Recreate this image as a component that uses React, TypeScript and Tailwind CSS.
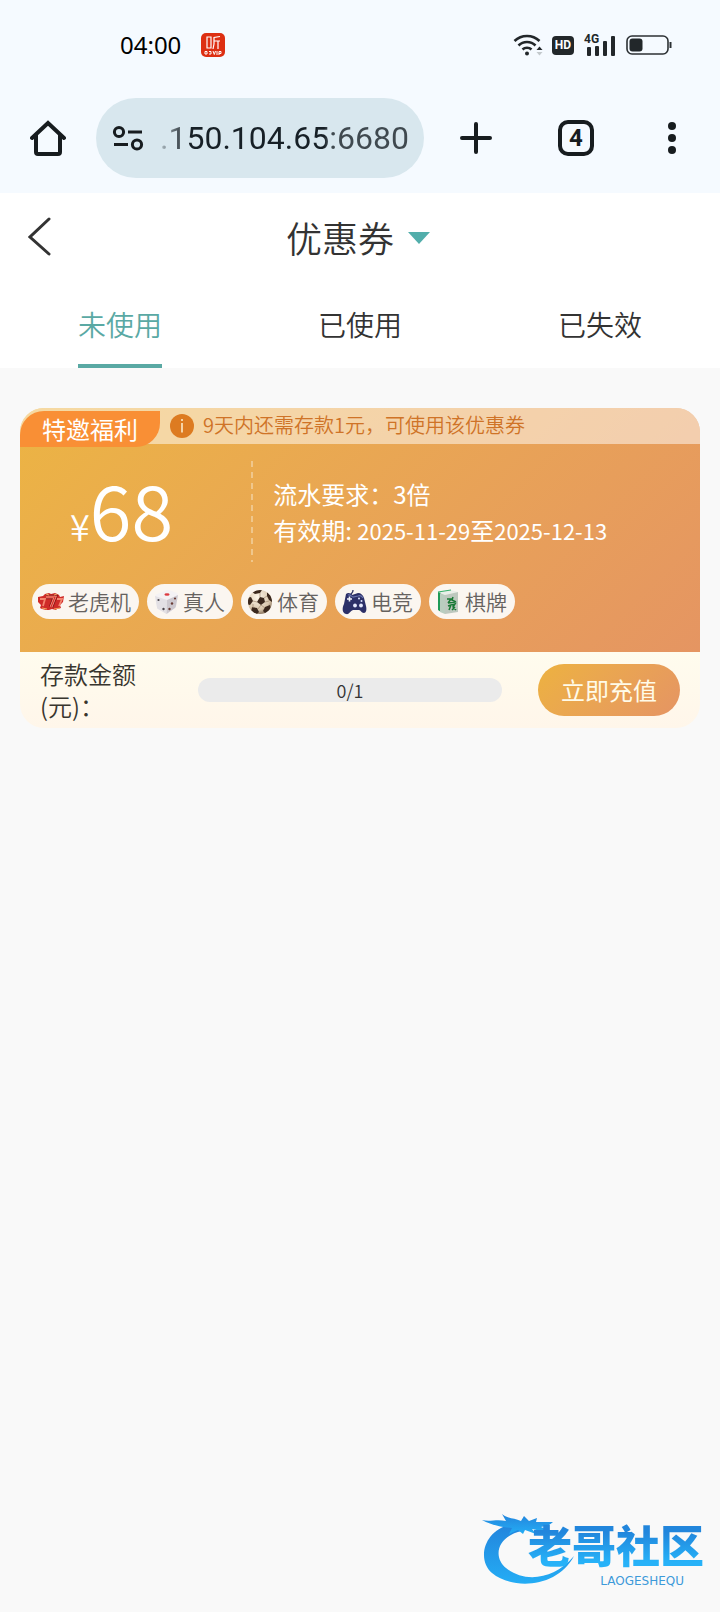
import type { ReactNode } from "react";

const tabs = ["未使用", "已使用", "已失效"];

const games: { name: string; icon: ReactNode }[] = [
    { name: "老虎机", icon: <SlotIcon /> },
    { name: "真人", icon: <DiceIcon /> },
    { name: "体育", icon: <BallIcon /> },
    { name: "电竞", icon: <GamepadIcon /> },
    { name: "棋牌", icon: <MahjongIcon /> },
];

function SlotIcon() {
    return (
        <svg viewBox="0 0 26 26" className="h-[26px] w-[26px] shrink-0" aria-hidden="true">
            <path
                d="M0 8l5-1 2-2 4-1 2 1 4-1 4 2 1 2 4-1-1 6-3 3 1 3-4 1-1 1-4-1-3 1-3 0-4-1-2-1 1-3-3-3z"
                fill="#cf2b28"
            />
            <path d="M2 10h5l-2 7M19 10h5l-3 7" stroke="#f4856f" strokeWidth="1.800" fill="none" />
            <path d="M8 8h9l-4 10" stroke="#8f1215" strokeWidth="4.500" fill="none" />
            <path d="M8 8h9l-4 10" stroke="#f7a08a" strokeWidth="2.600" fill="none" />
            <path d="M8 8h9l-4 10" stroke="#d8302b" strokeWidth="1.200" fill="none" />
            <path d="M4 19l5 1M16 20l6-1M8 5l3 1M16 6l3-1" stroke="#f3a35c" strokeWidth="1" />
        </svg>
    );
}

function DiceIcon() {
    return (
        <svg viewBox="0 0 26 26" className="h-[26px] w-[26px] shrink-0" aria-hidden="true">
            <path
                d="M2 7q0-1 1-1.500L14 1q1-.5 2 0l8 3q1 .5 1 2l-2 11q0 1-1 2l-7 5.500q-1 .8-2 .3L5 20q-1-.5-1-1.500z"
                fill="#f4f2f4"
            />
            <path d="M2 7l12 4-.5 14L5 20q-1-.5-1-1.500z" fill="#e3e0e4" />
            <path d="M14 11l11-5-2 11q0 1-1 2l-8.500 6z" fill="#cdc8ce" />
            <ellipse cx="14" cy="5.500" rx="2.600" ry="1.200" fill="#dd3a40" />
            <circle cx="5.500" cy="11" r="1.100" fill="#4a454c" />
            <circle cx="10.500" cy="20" r="1.200" fill="#4a454c" />
            <circle cx="16.500" cy="20" r="1.200" fill="#6a3c35" />
            <circle cx="19" cy="14.500" r="1.200" fill="#6a3c35" />
            <circle cx="22" cy="9.500" r="1.100" fill="#6a3c35" />
        </svg>
    );
}

function BallIcon() {
    return (
        <svg viewBox="0 0 26 26" className="h-[26px] w-[26px] shrink-0" aria-hidden="true">
            <defs>
                <radialGradient id="ball" cx="0.4" cy="0.3" r="0.75">
                    <stop offset="0" stopColor="#fdf6ea" />
                    <stop offset="0.7" stopColor="#d9c6ac" />
                    <stop offset="1" stopColor="#7d6650" />
                </radialGradient>
                <clipPath id="ballClip">
                    <circle cx="13" cy="13" r="12" />
                </clipPath>
            </defs>
            <circle cx="13" cy="13" r="12" fill="url(#ball)" />
            <g clipPath="url(#ballClip)" fill="#3b281d">
                <path d="M13 8l4 1 1 4-4 3-4-3z" />
                <path d="M8 0l7 1-2 3-5 1-3-2z" />
                <path d="M20 3l5 5v5l-3-2-2-4z" />
                <path d="M0 9l4-1 2 4-3 4-4-1z" />
                <path d="M5 18l5 1 2 4-3 3-5-3z" />
                <path d="M18 18l5-2 1 5-5 4-3-3z" />
                <path
                    d="M13 8V4M17 9l3-2M18 13l4-1M14 16l4 3M10 13l-4-1M14 16l-3 4M6 15l0 4"
                    stroke="#a08a70"
                    strokeWidth="0.7"
                />
            </g>
        </svg>
    );
}

function GamepadIcon() {
    return (
        <svg viewBox="0 0 26 26" className="h-[26px] w-[26px] shrink-0" aria-hidden="true">
            <path d="M10 6c0-3 2-1 2-5" stroke="#2b2f5c" strokeWidth="1.300" fill="none" />
            <path
                d="M5 5c2-2 5-1 6 1l6-2c3 0 5 2 6 5l2 8c1 4 0 7-2 7-3 0-3-3-5-3l-6 0c-3 1-4 5-7 4-4-1-4-6-2-10z"
                fill="#2c3068"
            />
            <path d="M7 6c2-1 3 1 5 2l5-1c2-1 4 0 5 2" stroke="#6974ad" strokeWidth="1.200" fill="none" />
            <path d="M8.500 7.500v5M6 10h5" stroke="#f2f4fb" strokeWidth="1.600" />
            <circle cx="18" cy="9.500" r="1" fill="#dfe5ff" />
            <circle cx="20.500" cy="12" r="1" fill="#dfe5ff" />
            <circle cx="14" cy="16.500" r="1.900" fill="#e6eafd" />
            <circle cx="20" cy="16.500" r="1.900" fill="#e6eafd" />
        </svg>
    );
}

function MahjongIcon() {
    return (
        <svg viewBox="0 0 26 26" className="h-[26px] w-[26px] shrink-0" aria-hidden="true">
            <path d="M3 3l13-2 7 2-13 3z" fill="#e9efe9" />
            <path d="M3 3l3 1v19l-3-2z" fill="#1f9a56" />
            <path d="M5 4l5 2v19l-5-2z" fill="#b9cdbf" />
            <path d="M10 6l13-3v20l-13 2z" fill="#bdc8be" />
            <path d="M3 3l13-2" stroke="#34b06a" strokeWidth="1.200" />
            <path
                d="M12 10l4 0-3 4M18 8l-1 3 4 2M13 14l7-1M13 17l3-1-2 5M17 16l3-1-2 3 3 3M17 21l3-3"
                stroke="#197a35"
                strokeWidth="1.500"
                fill="none"
            />
        </svg>
    );
}

function StatusBar() {
    return (
        <div className="flex h-[90px] items-center justify-between pl-30 pr-12 text-black">
            <div className="flex items-center gap-5">
                <time className="font-['Noto_Sans'] text-2xl">04:00</time>
                <svg viewBox="0 0 24 24" className="h-6 w-6" aria-hidden="true">
                    <rect width="24" height="24" rx="5" fill="#dd2f12" />
                    <path d="M6 4h4v11H6zM19 3.500l-6 1V11l-1 5M13 8h6M17 8v8" stroke="#fff" strokeWidth="1.200" fill="none" />
                    <path
                        d="M4 18.500h2v2.500H4zM8 18.500h2v2.500H8M12 18l1.300 3.500L14.500 18M16 18v4M18 22v-3.500h2v2h-2"
                        stroke="#fff"
                        strokeWidth="1"
                        fill="none"
                    />
                </svg>
            </div>
            <div className="flex items-center gap-[9px]">
                <svg viewBox="0 0 30 24" className="h-6 w-[30px]" fill="none" stroke="#22272a" strokeWidth="2.600" aria-hidden="true">
                    <path d="M1.500 8a18 18 0 0 1 25 0M5.500 12.500a12 12 0 0 1 17 0M9.500 16.500a6.500 6.500 0 0 1 9 0" />
                    <circle cx="14" cy="20.500" r="2" fill="#22272a" stroke="none" />
                    <path d="M23.500 17l3-3.500 3 3.500z" fill="#22272a" stroke="none" />
                    <path d="M23.500 19l3 3.500 3-3.500z" fill="#c3c9cc" stroke="none" />
                </svg>
                <span className="flex h-[19px] w-[22px] items-center justify-center rounded-sm bg-[#22272a] font-['Roboto'] text-xs font-bold text-white">
                    HD
                </span>
                <span className="relative h-6 w-[34px]">
                    <svg viewBox="0 0 34 24" className="h-6 w-[34px]" fill="#22272a" aria-hidden="true">
                        <rect x="4" y="14" width="4" height="9" rx="1" />
                        <rect x="12" y="13" width="4" height="10" rx="1" />
                        <rect x="20" y="8" width="4" height="15" rx="1" />
                        <rect x="28" y="3" width="4" height="20" rx="1" />
                    </svg>
                    <span className="absolute left-px top-0 font-['Roboto'] text-xs leading-3 font-bold text-[#22272a]">4G</span>
                </span>
                <svg viewBox="0 0 46 22" className="h-[22px] w-[46px]" aria-hidden="true">
                    <rect x="1" y="2" width="41" height="18" rx="5" fill="none" stroke="#2c3134" strokeWidth="1.600" />
                    <rect x="3.500" y="4.500" width="13" height="13" rx="3" fill="#22272a" />
                    <path d="M44.500 8v6" stroke="#2c3134" strokeWidth="2" />
                </svg>
            </div>
        </div>
    );
}

function BrowserBar() {
    return (
        <div className="flex items-center pt-2 pr-9 pb-[15px] pl-[30px] text-[#171c1f]">
            <button type="button" aria-label="主页">
                <svg viewBox="0 0 36 36" className="h-9 w-9" fill="none" stroke="currentColor" strokeWidth="4" aria-hidden="true">
                    <path d="M2 18L18 3l16 15" strokeLinecap="round" />
                    <path d="M6 15v17q0 2 2 2h20q2 0 2-2V15" />
                </svg>
            </button>
            <div className="ml-[30px] flex h-20 min-w-0 flex-1 items-center rounded-full bg-[#d8e7ee] pr-4 pl-4">
                <svg viewBox="0 0 32 28" className="h-7 w-8 shrink-0" fill="none" stroke="currentColor" strokeWidth="3" aria-hidden="true">
                    <circle cx="7" cy="8" r="4.600" />
                    <path d="M16 8h14M2 20.500h14" />
                    <circle cx="25" cy="20.500" r="4.600" />
                </svg>
                <input
                    type="text"
                    aria-label="网址"
                    defaultValue=".150.104.65:6680"
                    className="ml-4 w-full min-w-0 bg-[linear-gradient(90deg,#17202600_-8px,#172026_28px,#172026_164px,#3f494f_168px)] bg-clip-text font-['Roboto'] text-[32px] leading-10 text-transparent outline-none"
                />
            </div>
            <button type="button" aria-label="新标签页" className="ml-9">
                <svg viewBox="0 0 32 32" className="h-8 w-8" stroke="currentColor" strokeWidth="4" strokeLinecap="round" aria-hidden="true">
                    <path d="M16 2v28M2 16h28" />
                </svg>
            </button>
            <button
                type="button"
                className="ml-[66px] flex h-9 w-9 items-center justify-center rounded-[10px] border-4 border-current font-['Roboto'] text-2xl font-bold"
            >
                4
            </button>
            <button type="button" aria-label="更多" className="ml-[66px]">
                <svg viewBox="0 0 24 36" className="h-9 w-6" fill="currentColor" aria-hidden="true">
                    <circle cx="12" cy="6" r="4" />
                    <circle cx="12" cy="18" r="4" />
                    <circle cx="12" cy="30" r="4" />
                </svg>
            </button>
        </div>
    );
}

function PageHeader() {
    return (
        <header className="bg-white text-[#333]">
            <div className="grid h-[88px] grid-cols-[60px_1fr_64px] items-center">
                <button type="button" aria-label="返回" className="pl-7">
                    <svg viewBox="0 0 24 40" className="h-10 w-6" fill="none" stroke="currentColor" strokeWidth="3" strokeLinecap="round" aria-hidden="true">
                        <path d="M21 2L2 20l19 17" />
                    </svg>
                </button>
                <button type="button" className="flex items-center justify-center gap-3.5 text-4xl font-[350]">
                    优惠券
                    <svg viewBox="0 0 22 14" className="h-3.5 w-[22px]" fill="#52aeab" aria-hidden="true">
                        <path d="M0 2h22L11 14z" />
                    </svg>
                </button>
            </div>
            <nav className="grid grid-cols-3 pt-1">
                {tabs.map((tab, i) => (
                    <button key={tab} type="button" className="flex justify-center text-[28px] leading-[79px] font-[350]">
                        {i === 0 ? (
                            <span className="border-b-4 border-[#5aa9a4] text-[#5aa9a4]">{tab}</span>
                        ) : (
                            <span className="border-b-4 border-transparent">{tab}</span>
                        )}
                    </button>
                ))}
            </nav>
        </header>
    );
}

function CouponCard() {
    return (
        <section className="overflow-hidden rounded-3xl font-[350]">
            <div className="bg-linear-135 from-[#ecb443] to-[#e59562] pb-[33px] text-white">
                {/* Notice strip */}
                <div className="flex h-9 items-start bg-white/50">
                    <span className="mt-[3px] h-9 rounded-tl-3xl rounded-br-3xl bg-[#f98f35] px-[22px] text-2xl leading-9 font-normal">
                        特邀福利
                    </span>
                    <svg viewBox="0 0 24 24" className="mt-1.5 ml-2.5 h-6 w-6" aria-hidden="true">
                        <circle cx="12" cy="12" r="12" fill="#dd7b21" />
                        <path d="M12 9v9.500M12 5v2" stroke="#f6d3a6" strokeWidth="2" />
                    </svg>
                    <p className="ml-[9px] text-xl leading-[34px] text-[#cf7327]">9天内还需存款1元，可使用该优惠券</p>
                </div>

                {/* Amount and terms */}
                <div className="mt-[17px] flex h-[101px] items-center">
                    <div className="flex w-[34%] items-baseline pb-2 pl-[50px]">
                        <span className="text-4xl">¥</span>
                        <span className="text-[76px] leading-[92px]">68</span>
                    </div>
                    <div className="h-full w-[2px] bg-[repeating-linear-gradient(180deg,#f0c78c_0_6px,transparent_6px_11px)]" />
                    <div className="pl-5 text-2xl leading-9 font-normal">
                        <p>流水要求：3倍</p>
                        <p>
                            有效期: <time className="text-[22px]">2025-11-29</time>至<time className="text-[22px]">2025-12-13</time>
                        </p>
                    </div>
                </div>

                {/* Games the coupon is valid for */}
                <ul className="mt-[22px] flex flex-wrap gap-2 px-3">
                    {games.map((game) => (
                        <li
                            key={game.name}
                            className="flex h-[35px] items-center gap-1 rounded-full bg-[#fbf6f0] pr-2 pl-1.5 text-[21px] text-[#66625f]"
                        >
                            {game.icon}
                            {game.name}
                        </li>
                    ))}
                </ul>
            </div>

            {/* Deposit progress */}
            <div className="flex h-[76px] items-center bg-linear-to-b from-[#fffcee] to-[#fff6ea] px-5">
                <div className="w-[158px] shrink-0 text-2xl leading-8 text-[#38352e]">
                    存款金额
                    <br />
                    (元)：
                </div>
                <div className="h-6 flex-1 rounded-full bg-[#ebebeb] text-center text-lg leading-6 text-[#333]">0/1</div>
                <button
                    type="button"
                    className="ml-9 h-[52px] rounded-full bg-linear-135 from-[#edb23f] to-[#e59463] px-[23px] text-2xl font-normal text-[#fffbe8]"
                >
                    立即充值
                </button>
            </div>
        </section>
    );
}

function Watermark() {
    return (
        <footer className="relative mt-auto mr-4 mb-6 self-end pl-[46px] text-right">
            <svg viewBox="0 0 94 76" className="absolute bottom-0 left-0 h-[76px] w-[94px]" aria-hidden="true">
                <defs>
                    <linearGradient id="dragon" x1="0" y1="0" x2="0" y2="1">
                        <stop offset="0" stopColor="#2384dc" />
                        <stop offset="1" stopColor="#24adf5" />
                    </linearGradient>
                </defs>
                <g fill="url(#dragon)">
                    <path d="M34 12C4 14-7 46 10 61c22 18 66 14 82-17-20 24-50 27-68 12C10 44 16 24 40 19z" />
                    <path d="M0 8c8 2 14-1 24 1l-4-7c6 5 12 4 19 7l3-5 5 5 8-3-1 4 17 0c-4 4-8 4-12 5l9 4c-7 1-12-1-18-2l4 5-11-4-2 4-5-4-9 4 3-6C19 15 9 13 0 8z" />
                </g>
            </svg>
            <p className="relative bg-linear-to-b from-[#2286dc] from-30% to-[#27b2f8] to-80% bg-clip-text text-[44px] leading-[60px] font-black text-transparent">
                老哥社区
            </p>
            <p className="relative pr-5 font-['DejaVu_Sans'] text-xs leading-[14px] text-[#3d9ad9]">LAOGESHEQU</p>
        </footer>
    );
}

export default function App() {
    return (
        <div className="flex min-h-screen flex-col bg-[#f9f9f9] font-['Noto_Sans_CJK_SC',sans-serif]">
            <div className="bg-[#f5faff]">
                <StatusBar />
                <BrowserBar />
            </div>
            <PageHeader />
            <main className="px-5 pt-10">
                <CouponCard />
            </main>
            <Watermark />
        </div>
    );
}
